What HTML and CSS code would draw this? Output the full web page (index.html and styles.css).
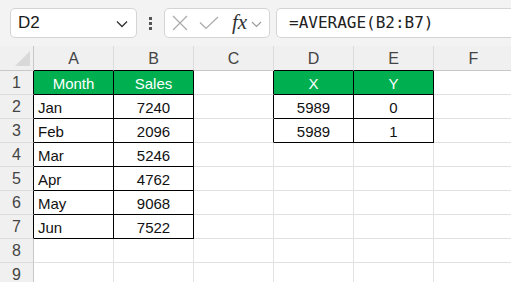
FILE: index.html
```html
<!DOCTYPE html>
<html lang="en">
<head>
    <meta charset="UTF-8">
    <title>Sheet</title>
    <link rel="stylesheet" href="styles.css">
</head>
<body>

<div class="toolbar">
    <div class="name-box">
        <span>D2</span>
        <svg class="chev" width="12" height="8" viewBox="0 0 12 8"><path d="M1 1.5 L6 6.5 L11 1.5" fill="none" stroke="#333" stroke-width="1.3"/></svg>
    </div>
    <div class="dots"><i></i><i></i><i></i></div>
    <div class="func-box">
        <svg width="16" height="16" viewBox="0 0 16 16"><path d="M1 1 L15 15 M15 1 L1 15" stroke="#aaa" stroke-width="1.2"/></svg>
        <svg width="20" height="14" viewBox="0 0 20 14"><path d="M1 6.5 L7 12.5 L19 1" fill="none" stroke="#aaa" stroke-width="1.2"/></svg>
        <span class="fx">fx</span>
        <svg width="11" height="7" viewBox="0 0 11 7"><path d="M1 1 L5.5 5.5 L10 1" fill="none" stroke="#999" stroke-width="1.1"/></svg>
    </div>
    <div class="formula">=AVERAGE(B2:B7)</div>
</div>

<div class="sheet">
    <div class="corner"><span class="tri"></span></div>
    <div class="colh edge">A</div>
    <div class="colh edge">B</div>
    <div class="colh">C</div>
    <div class="colh edge">D</div>
    <div class="colh edge">E</div>
    <div class="colh">F</div>

    <div class="rowh edge">1</div>
    <div class="cell box head">Month</div>
    <div class="cell box head">Sales</div>
    <div class="cell edge"></div>
    <div class="cell box head">X</div>
    <div class="cell box head">Y</div>
    <div class="cell"></div>

    <div class="rowh edge">2</div>
    <div class="cell box">Jan</div>
    <div class="cell box num">7240</div>
    <div class="cell edge"></div>
    <div class="cell box num">5989</div>
    <div class="cell box num">0</div>
    <div class="cell"></div>

    <div class="rowh edge">3</div>
    <div class="cell box">Feb</div>
    <div class="cell box num">2096</div>
    <div class="cell edge"></div>
    <div class="cell box num">5989</div>
    <div class="cell box num">1</div>
    <div class="cell"></div>

    <div class="rowh edge">4</div>
    <div class="cell box">Mar</div>
    <div class="cell box num">5246</div>
    <div class="cell"></div>
    <div class="cell"></div>
    <div class="cell"></div>
    <div class="cell"></div>

    <div class="rowh edge">5</div>
    <div class="cell box">Apr</div>
    <div class="cell box num">4762</div>
    <div class="cell"></div>
    <div class="cell"></div>
    <div class="cell"></div>
    <div class="cell"></div>

    <div class="rowh edge">6</div>
    <div class="cell box">May</div>
    <div class="cell box num">9068</div>
    <div class="cell"></div>
    <div class="cell"></div>
    <div class="cell"></div>
    <div class="cell"></div>

    <div class="rowh edge">7</div>
    <div class="cell box">Jun</div>
    <div class="cell box num">7522</div>
    <div class="cell"></div>
    <div class="cell"></div>
    <div class="cell"></div>
    <div class="cell"></div>

    <div class="rowh">8</div>
    <div class="cell"></div>
    <div class="cell"></div>
    <div class="cell"></div>
    <div class="cell"></div>
    <div class="cell"></div>
    <div class="cell"></div>

    <div class="rowh">9</div>
    <div class="cell"></div>
    <div class="cell"></div>
    <div class="cell"></div>
    <div class="cell"></div>
    <div class="cell"></div>
    <div class="cell"></div>
</div>

</body>
</html>
```

FILE: styles.css
```css
/* general */
body {
    margin: 0;
    padding: 0;
    width: 511px;
    height: 282px;
    overflow: hidden;
    background-color: #f3f3f3;
    font-family: "Liberation Sans", Arial, sans-serif;
    color: #222;
}
* {
    box-sizing: border-box;
}

/* formula bar */
.toolbar {
    height: 46px;
    display: flex;
    align-items: flex-start;
    padding-top: 8px;
    padding-left: 10px;
}
.name-box {
    width: 127px;
    height: 30px;
    background-color: white;
    border: 1px solid #d4d4d4;
    border-radius: 5px;
    display: flex;
    align-items: center;
    justify-content: space-between;
    padding: 0 8px 0 7px;
    font-size: 17px;
    color: #1a1a1a;
}
.name-box .chev {
    margin-top: 2px;
}
.dots {
    width: 27px;
    height: 30px;
    display: flex;
    flex-direction: column;
    align-items: center;
    justify-content: center;
    gap: 2px;
}
.dots i {
    display: block;
    width: 3px;
    height: 3px;
    background-color: #555;
}
.func-box {
    width: 106px;
    height: 30px;
    background-color: white;
    border: 1px solid #d4d4d4;
    border-radius: 5px;
    display: flex;
    align-items: center;
    padding-left: 7px;
}
.func-box svg:nth-child(2) {
    margin-left: 11px;
}
.func-box .fx {
    font-family: "Liberation Serif", "Times New Roman", serif;
    font-style: italic;
    font-size: 21px;
    color: #333;
    margin-left: 13px;
    margin-top: -2px;
}
.func-box svg:last-child {
    margin-left: 4px;
    margin-top: 2px;
}
.formula {
    margin-left: 6px;
    flex: 1;
    height: 30px;
    background-color: white;
    border: 1px solid #d4d4d4;
    border-right: none;
    border-radius: 5px 0 0 5px;
    padding-left: 12px;
    font-family: "DejaVu Sans Mono", "Liberation Mono", monospace;
    font-size: 16px;
    line-height: 28px;
    color: #222;
    white-space: nowrap;
}

/* grid */
.sheet {
    display: grid;
    grid-template-columns: 34px 80px 80px 80px 80px 80px 80px;
    grid-template-rows: 25px repeat(9, 24px);
    width: 514px;
    background-color: white;
}
.corner,
.colh,
.rowh {
    background-color: #f0f0f0;
    color: #444;
    font-size: 16px;
    display: flex;
    align-items: center;
    justify-content: center;
}
.corner {
    border-right: 1px solid #c8c8c8;
    border-bottom: 1px solid #c8c8c8;
    position: relative;
}
.corner .tri {
    position: absolute;
    right: 3px;
    bottom: 4px;
    width: 0;
    height: 0;
    border-left: 15px solid transparent;
    border-bottom: 15px solid #d9d9d9;
}
.colh {
    border-right: 1px solid #dcdcdc;
    border-bottom: 1px solid #c8c8c8;
    padding-top: 1px;
}
.colh.edge {
    border-bottom-color: #000;
}
.rowh {
    border-right: 1px solid #c8c8c8;
    border-bottom: 1px solid #dcdcdc;
    padding-top: 1px;
}
.rowh.edge {
    border-right-color: #000;
}
.cell {
    border-right: 1px solid #e1e1e1;
    border-bottom: 1px solid #e1e1e1;
    font-size: 15px;
    display: flex;
    align-items: center;
    padding-left: 4px;
    padding-top: 1px;
    color: #111;
}
.cell.edge {
    border-right-color: #000;
}
.cell.box {
    border-right-color: #000;
    border-bottom-color: #000;
}
.cell.head {
    background-color: #00b050;
    color: white;
    justify-content: center;
    padding-left: 0;
}
.cell.num {
    justify-content: center;
    padding-left: 0;
}
```
